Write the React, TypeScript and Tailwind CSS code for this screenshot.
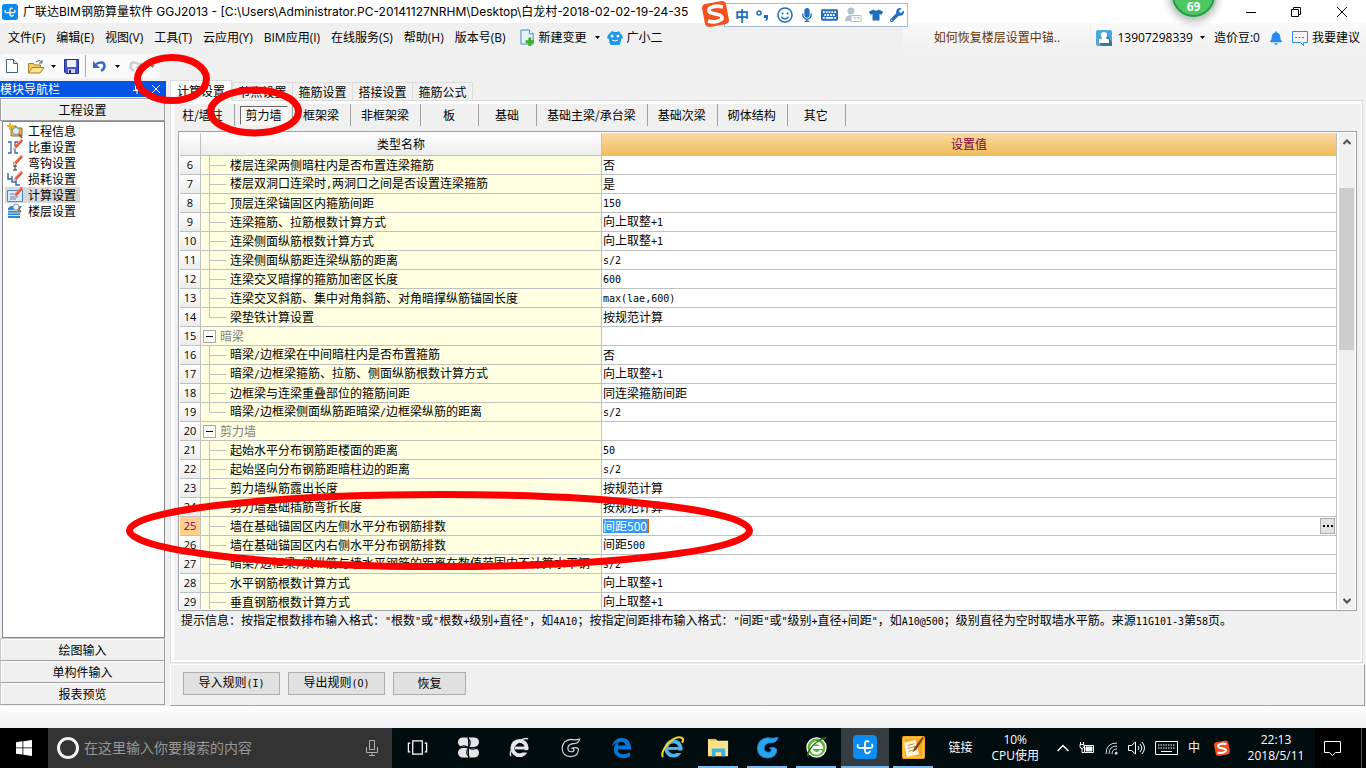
import type { ReactNode } from "react";
import clsx from "clsx";
import {
  FaBell,
  FaKeyboard,
  FaMicrophone,
  FaRegSmile,
  FaTshirt,
  FaWrench,
} from "react-icons/fa";

const uiFont = "font-['Open_Sans','Noto_Sans_CJK_SC',sans-serif]";

const menus = [
  "文件(F)",
  "编辑(E)",
  "视图(V)",
  "工具(T)",
  "云应用(Y)",
  "BIM应用(I)",
  "在线服务(S)",
  "帮助(H)",
  "版本号(B)",
];

const tabs = ["计算设置", "节点设置", "箍筋设置", "搭接设置", "箍筋公式"];

const components = [
  "柱/墙柱",
  "剪力墙",
  "框架梁",
  "非框架梁",
  "板",
  "基础",
  "基础主梁/承台梁",
  "基础次梁",
  "砌体结构",
  "其它",
];

type Row = {
  no: number;
  name: string;
  value?: string;
  kind?: "group" | "last";
};

const rows: Row[] = [
  { no: 6, name: "楼层连梁两侧暗柱内是否布置连梁箍筋", value: "否" },
  { no: 7, name: "楼层双洞口连梁时,两洞口之间是否设置连梁箍筋", value: "是" },
  { no: 8, name: "顶层连梁锚固区内箍筋间距", value: "150" },
  { no: 9, name: "连梁箍筋、拉筋根数计算方式", value: "向上取整+1" },
  { no: 10, name: "连梁侧面纵筋根数计算方式", value: "向上取整+1" },
  { no: 11, name: "连梁侧面纵筋距连梁纵筋的距离", value: "s/2" },
  { no: 12, name: "连梁交叉暗撑的箍筋加密区长度", value: "600" },
  {
    no: 13,
    name: "连梁交叉斜筋、集中对角斜筋、对角暗撑纵筋锚固长度",
    value: "max(lae,600)",
  },
  { no: 14, name: "梁垫铁计算设置", value: "按规范计算", kind: "last" },
  { no: 15, name: "暗梁", kind: "group" },
  { no: 16, name: "暗梁/边框梁在中间暗柱内是否布置箍筋", value: "否" },
  {
    no: 17,
    name: "暗梁/边框梁箍筋、拉筋、侧面纵筋根数计算方式",
    value: "向上取整+1",
  },
  { no: 18, name: "边框梁与连梁重叠部位的箍筋间距", value: "同连梁箍筋间距" },
  {
    no: 19,
    name: "暗梁/边框梁侧面纵筋距暗梁/边框梁纵筋的距离",
    value: "s/2",
    kind: "last",
  },
  { no: 20, name: "剪力墙", kind: "group" },
  { no: 21, name: "起始水平分布钢筋距楼面的距离", value: "50" },
  { no: 22, name: "起始竖向分布钢筋距暗柱边的距离", value: "s/2" },
  { no: 23, name: "剪力墙纵筋露出长度", value: "按规范计算" },
  { no: 24, name: "剪力墙基础插筋弯折长度", value: "按规范计算" },
  { no: 25, name: "墙在基础锚固区内左侧水平分布钢筋排数", value: "间距500" },
  { no: 26, name: "墙在基础锚固区内右侧水平分布钢筋排数", value: "间距500" },
  {
    no: 27,
    name: "暗梁/边框梁/梁纵筋与墙水平钢筋的距离在数值范围内不计算水平钢",
    value: "s/2",
  },
  { no: 28, name: "水平钢筋根数计算方式", value: "向上取整+1" },
  { no: 29, name: "垂直钢筋根数计算方式", value: "向上取整+1" },
];

const activeRow = 25;

// Latin runs are set half as wide as a Chinese character
const Mixed = ({ text }: { text: string }) => (
  <>
    {text.split(/([\x20-\x7e]+)/).map((part, i) =>
      i % 2 ? (
        <span
          key={i}
          className="font-['DejaVu_Sans_Mono',monospace] text-[10px] whitespace-pre"
        >
          {part}
        </span>
      ) : (
        part
      ),
    )}
  </>
);

const Caret = ({ className }: { className?: string }) => (
  <svg viewBox="0 0 5 3" className={clsx("h-[3px] w-[5px]", className)}>
    <path d="M0 0h5L2.5 3z" fill="currentColor" />
  </svg>
);

const GldLogo = ({ className }: { className?: string }) => (
  <svg viewBox="0 0 24 24" className={className}>
    <rect width="24" height="24" rx="4" fill="#0a8cf0" />
    <path
      d="M15.500 6.500c-2-1-3.500 0-3.500 2v7c0 3.200 4 3.500 5 1M4.800 10c-.8 2 .4 3 2.200 3h10c2.500 0 3-2 2-3.500"
      fill="none"
      stroke="#fff"
      strokeWidth="1.900"
      strokeLinecap="round"
    />
  </svg>
);

const SogouLogo = ({ className }: { className?: string }) => (
  <svg viewBox="0 0 27 27" className={className}>
    <path d="M3 4 20 1q3 0 4 3l3 16q0 3-3 4L8 27q-4 0-5-3L0 8q0-3 3-4z" fill="#f4511e" />
    <path
      d="M21 7C14 5 6 7 7 11s12 2 13 6-8 6-14 4"
      fill="none"
      stroke="#fff"
      strokeWidth="3.600"
    />
  </svg>
);

const TitleBar = () => (
  <header className={clsx("flex h-[23px] shrink-0 items-center bg-white", uiFont)}>
    <GldLogo className="ml-0.5 size-4" />
    <h1 className="ml-[5px] flex-1 overflow-hidden font-['Inter','Noto_Sans_CJK_SC',sans-serif] text-xs leading-4 whitespace-nowrap">
      广联达BIM钢筋算量软件 GGJ2013 -
      [C:\Users\Administrator.PC-20141127NRHM\Desktop\白龙村-2018-02-02-19-24-35
    </h1>
    <div className="flex">
      <button aria-label="最小化" className="flex w-[45px] justify-center">
        <svg viewBox="0 0 10 10" className="size-2.5">
          <path d="M0 5.500h10" stroke="#000" />
        </svg>
      </button>
      <button aria-label="还原" className="flex w-[45px] justify-center">
        <svg viewBox="0 0 10 10" className="size-2.5" fill="none" stroke="#000">
          <path d="M.5 2.500h7v7h-7zM2.500 2.500v-2h7v7h-2" />
        </svg>
      </button>
      <button aria-label="关闭" className="flex w-12 justify-center">
        <svg viewBox="0 0 10 10" className="size-2.5" stroke="#000">
          <path d="m0 0 10 10M10 0 0 10" />
        </svg>
      </button>
    </div>
  </header>
);

const MenuBar = () => (
  <nav
    className={clsx(
      "flex h-[29px] shrink-0 items-center text-xs leading-4 whitespace-nowrap",
      uiFont,
    )}
  >
    <div className="flex gap-[11px] pl-2">
      {menus.map((m) => (
        <button key={m}>{m}</button>
      ))}
    </div>
    <button className="ml-3.5 flex items-center gap-1">
      <svg viewBox="0 0 16 18" className="h-[17px] w-[15px]">
        <path d="M1 1h9l4 4v11H1z" fill="#e4f4fd" stroke="#3a86b8" />
        <path d="M10 1v4h4" fill="#fff" stroke="#3a86b8" />
        <path d="M9 9h3v3h3v3h-3v3H9v-3H6v-3h3z" fill="#3cab22" />
      </svg>
      新建变更
      <Caret className="ml-1" />
    </button>
    <button className="ml-[7px] flex items-center gap-1">
      <svg viewBox="0 0 16 16" className="size-4">
        <path
          d="M3 3 5 1l2 1h3l2-1 1 2q3 2 3 5l-2 1q0 5-2 6H4q-2-1-2-6L0 8q0-3 3-5z"
          fill="#1b97e8"
        />
        <circle cx="5" cy="6" r="1.500" fill="#fff" />
        <circle cx="11" cy="6" r="1.500" fill="#fff" />
        <path d="M5 10q3 2 6 0" fill="none" stroke="#fff" />
      </svg>
      广小二
    </button>
    <div className="ml-auto flex h-full w-[187px] items-center justify-center bg-linear-to-b from-[#fafafa] to-[#f0f0f0] text-[#663300]">
      如何恢复楼层设置中锚..
    </div>
    <div className="ml-px flex h-full items-center bg-linear-to-b from-[#fafafa] to-[#f0f0f0] pr-1.5 pl-[5px]">
      <svg viewBox="0 0 16 16" className="size-4">
        <rect width="16" height="16" rx="2" fill="#4ea6da" />
        <path d="M8 3.500 13 8l3 4v4H6l-3-4z" fill="#36769c" />
        <path d="M5 5a3 3 0 0 1 6 0c0 2-1 2.500-1 3.500l3 1V13H3V9.500l3-1C6 7.500 5 7 5 5z" fill="#fff" />
      </svg>
      <button className="ml-[5px] flex items-center gap-[7px]">
        13907298339
        <Caret />
      </button>
      <span className="ml-[9px]">造价豆:0</span>
      <button aria-label="通知" className="ml-2.5">
        <FaBell className="h-3.5 w-3 text-[#2a8bf2]" />
      </button>
      <button className="ml-2.5 flex items-center gap-1">
        <svg viewBox="0 0 16 16" className="size-4" fill="none" stroke="#2a8bf2">
          <path d="M.5 1.500h15v11h-4v3l-3-3h-8z" />
          <path d="M3 7.500h10" strokeDasharray="2 1.500" />
        </svg>
        我要建议
      </button>
    </div>
  </nav>
);

const ToolBar = () => (
  <div className="flex h-7 shrink-0 items-center">
    <div className="flex h-6 w-[160px] items-center rounded-sm bg-[#fafafa] pl-1.5">
      <button aria-label="新建">
        <svg viewBox="0 0 12 14" className="h-3.5 w-3">
          <path d="M.5.5h7l4 4v9H.5z" fill="#fff" stroke="#44617f" />
          <path d="M7.500.5v4h4" fill="#cfdcea" stroke="#44617f" />
        </svg>
      </button>
      <button aria-label="打开" className="ml-2.5 flex items-center gap-1.5">
        <svg viewBox="0 0 17 15" className="h-[15px] w-[17px]">
          <path d="M.5 14V4.500h5l1 1.500h6v3" fill="#f3cf63" stroke="#a5802c" />
          <path d="M.5 14 4 8.500h12L12 14z" fill="#ffe48b" stroke="#a5802c" />
          <path d="M8 3q4-3 6 1m0-3v3h-3" fill="none" stroke="#44617f" />
        </svg>
        <Caret />
      </button>
      <button aria-label="保存" className="ml-2">
        <svg viewBox="0 0 15 15" className="size-[15px]">
          <path d="M.5.5h14v14H2l-1.500-1.500z" fill="#4a53c8" stroke="#272f8c" />
          <path d="M3 1h9v7H3z" fill="#eef1fa" />
          <path d="M4 10h7v4H4z" fill="#cbd0e8" />
          <path d="M5 11h2v3H5z" fill="#272f8c" />
        </svg>
      </button>
      <i className="mx-1.5 h-[22px] w-px bg-[#a8a8a8]" />
      <button aria-label="撤销" className="ml-px flex items-center gap-2">
        <svg viewBox="0 0 14 14" className="size-3.5">
          <path d="M3 5q8-4 8.500 2 0 3-3.500 5" fill="none" stroke="#3568c5" strokeWidth="2.500" />
          <path d="M0 2v7h7z" fill="#3568c5" />
        </svg>
        <Caret />
      </button>
      <button aria-label="重做" className="ml-2 flex items-center gap-2 text-[#888]">
        <svg viewBox="0 0 14 14" className="size-3.5">
          <path d="M11 5Q3 1 2.500 7q0 3 3.500 5" fill="none" stroke="#cfcfcf" strokeWidth="2.500" />
          <path d="M14 2v7H7z" fill="#cfcfcf" />
        </svg>
        <Caret />
      </button>
    </div>
  </div>
);

const Pencil = () => (
  <>
    <path d="m6 11 1.500-4L14 0l2 2-6.500 7z" fill="#e8472b" />
    <path d="m6 11 1.500-4 2 2z" fill="#f4c99a" />
    <path d="M8.500 7 14.500.8" stroke="#f79a80" />
  </>
);

const navItems: { label: string; icon: ReactNode }[] = [
  {
    label: "工程信息",
    icon: (
      <>
        <path d="M4 3h5l1 2h5v8H4z" fill="#e7b84a" stroke="#96702a" />
        <path d="M3 0v7M0 3h7" stroke="#f5b915" strokeWidth="2" />
        <circle cx="9" cy="8" r="3.500" fill="#e3effa" stroke="#7e93ab" />
        <path d="m12 11 3 4" stroke="#8a5a28" strokeWidth="2" />
      </>
    ),
  },
  {
    label: "比重设置",
    icon: (
      <>
        <path d="M1 3h3v11H1M11 3H8v11h3" fill="none" stroke="#3a64ab" strokeWidth="1.300" />
        <Pencil />
      </>
    ),
  },
  {
    label: "弯钩设置",
    icon: (
      <>
        <path d="M8 7v8M6 8h4M6 15h4M6 11h4" fill="none" stroke="#333" />
        <Pencil />
      </>
    ),
  },
  {
    label: "损耗设置",
    icon: (
      <>
        <path d="M1 2v6h4M5 5v6h4M9 9v5h4" fill="none" stroke="#3a64ab" strokeWidth="1.400" />
        <Pencil />
      </>
    ),
  },
  {
    label: "计算设置",
    icon: (
      <>
        <path d="M.5 3.500h15v11H.5z" fill="#dbeafa" stroke="#4f86c6" />
        <path d="M3 7h4M3 10h8M3 12h6" stroke="#4f86c6" />
        <Pencil />
      </>
    ),
  },
  {
    label: "楼层设置",
    icon: (
      <>
        <path d="M1 5 4 3h11l-2 3v9H1z" fill="#2f86cf" />
        <path d="M1 7.500h13M1 10h13M1 12.500h13" stroke="#c8e4f8" />
        <circle cx="9" cy="4" r="3" fill="#eef4fa" stroke="#8a98a8" />
        <path d="m11 6 3 3" stroke="#b0722f" strokeWidth="2" />
      </>
    ),
  },
];

const NavButton = ({ children }: { children: ReactNode }) => (
  <button className="h-[22px] shrink-0 border-r border-b border-l border-[#a0a0a0] border-l-[#c8c8c8] bg-[#f0f0f0] shadow-[inset_1px_1px_0_#fff]">
    {children}
  </button>
);

const Sidebar = () => (
  <aside className="flex w-[166px] shrink-0 flex-col py-px">
    <div className="flex h-4 shrink-0 items-center bg-[#0055e5] text-white">
      <h2 className="flex-1">模块导航栏</h2>
      <button aria-label="固定" className="mr-[11px]">
        <svg viewBox="0 0 8 9" className="h-[9px] w-2" stroke="#fff" fill="none">
          <path d="M2.500.5h3v4h-3zM0 5.500h8M4 6v3" />
        </svg>
      </button>
      <button aria-label="关闭" className="mr-1.5">
        <svg viewBox="0 0 8 8" className="size-2" stroke="#fff">
          <path d="m0 0 8 8M8 0 0 8" />
        </svg>
      </button>
    </div>
    <div className="mr-px flex min-h-0 flex-1 flex-col pt-px">
      <button className="h-[23px] shrink-0 border border-[#a0a0a0] bg-[#f0f0f0] shadow-[inset_1px_1px_0_#fff]">
        工程设置
      </button>
      <ul className="ml-0.5 flex-1 border border-[#828790] bg-white pt-px pl-0.5">
        {navItems.map(({ label, icon }) => (
          <li key={label}>
            <button
              className={clsx(
                "flex h-4 items-center gap-[5px] pr-1 pl-0.5",
                label === "计算设置" && "bg-[#d8d8d8]",
              )}
            >
              <svg viewBox="0 0 16 16" className="size-4">
                {icon}
              </svg>
              {label}
            </button>
          </li>
        ))}
      </ul>
      <div className="h-px shrink-0 bg-[#c8c8c8]" />
      <NavButton>绘图输入</NavButton>
      <NavButton>单构件输入</NavButton>
      <NavButton>报表预览</NavButton>
    </div>
  </aside>
);

const TreeBranch = ({ last }: { last: boolean }) => (
  <span className="mr-1 ml-2 flex h-[18px] w-[17px] shrink-0 flex-col">
    <i className="h-2.5 border-b border-l border-[#c0c0c0]" />
    <i className={clsx("flex-1", !last && "border-l border-[#c0c0c0]")} />
  </span>
);

const SettingRow = ({ no, name, value, kind }: Row) => {
  const isActive = no === activeRow;

  return (
    <tr>
      <th
        scope="row"
        className={clsx(
          "h-[19px] border-r border-b border-[#c0c0c0] p-0 font-['Open_Sans',sans-serif] text-[11px] leading-4 font-normal",
          isActive
            ? "bg-[#ffd08a] text-[#800080]"
            : "bg-linear-to-b from-white to-[#ececec]",
        )}
      >
        {no}
      </th>
      <td className="overflow-hidden border-r border-b border-[#c0c0c0] bg-[#ffffe1] p-0">
        <div className="flex h-[18px] items-center whitespace-nowrap">
          {kind === "group" ? (
            <>
              <button
                aria-label="折叠"
                className="mr-1 ml-0.5 flex size-[13px] items-center justify-center border border-[#a8a8a8] bg-white"
              >
                <i className="h-px w-[7px] bg-black" />
              </button>
              <span className="text-[#808080]">{name}</span>
            </>
          ) : (
            <>
              <TreeBranch last={kind === "last"} />
              <span>
                <Mixed text={name} />
              </span>
            </>
          )}
        </div>
      </td>
      <td className="border-r border-b border-[#c0c0c0] bg-white py-0 pr-px pl-px">
        <div className="flex h-[18px] items-center justify-between">
          {isActive ? (
            <>
              <input
                aria-label={name}
                defaultValue={value}
                className="h-3.5 w-[46px] border-r border-[#cc6600] bg-[#3399ff] leading-3.5 text-white outline-none"
              />
              <button
                aria-label="更多"
                className="flex h-4 w-[15px] items-center justify-center gap-0.5 border border-[#adadad] bg-[#e1e1e1]"
              >
                <i className="size-0.5 bg-black" />
                <i className="size-0.5 bg-black" />
                <i className="size-0.5 bg-black" />
              </button>
            </>
          ) : (
            <span>
              <Mixed text={value ?? ""} />
            </span>
          )}
        </div>
      </td>
    </tr>
  );
};

const ScrollBar = () => (
  <div className="ml-0.5 flex w-4 shrink-0 flex-col bg-[#f0f0f0]">
    <button aria-label="向上滚动" className="flex h-[17px] items-center justify-center">
      <svg viewBox="0 0 8 6" className="h-1.5 w-2" fill="none" stroke="#505050" strokeWidth="2">
        <path d="m.5 5 3.500-3.500L7.500 5" />
      </svg>
    </button>
    <div className="mt-[38px] mr-px h-[162px] bg-[#cdcdcd]" />
    <button
      aria-label="向下滚动"
      className="mt-auto flex h-[17px] items-center justify-center"
    >
      <svg viewBox="0 0 8 6" className="h-1.5 w-2" fill="none" stroke="#505050" strokeWidth="2">
        <path d="m.5 1 3.500 3.500L7.500 1" />
      </svg>
    </button>
  </div>
);

const SettingTable = () => (
  <div className="mr-1 ml-1 flex min-h-0 flex-1 border border-[#a0a0a8] bg-white p-px">
    <div className="min-w-0 flex-1 overflow-hidden">
      <table className="w-full table-fixed border-separate border-spacing-0">
        <colgroup>
          <col className="w-[21px]" />
          <col className="w-[401px]" />
          <col />
        </colgroup>
        <thead>
          <tr className="h-[23px]">
            <td className="border-r border-b border-[#c0c0c0] bg-linear-to-b from-white to-[#ececec] p-0" />
            <th
              scope="col"
              className="border-r border-b border-[#c0c0c0] bg-linear-to-b from-white to-[#ececec] p-0 font-normal"
            >
              类型名称
            </th>
            <th
              scope="col"
              className="border-r border-b border-[#c0c0c0] bg-linear-to-b from-[#fbd9a0] to-[#f0bd5c] p-0 font-normal text-[#800040]"
            >
              设置值
            </th>
          </tr>
        </thead>
        <tbody>
          {rows.map((row) => (
            <SettingRow key={row.no} {...row} />
          ))}
        </tbody>
      </table>
    </div>
    <ScrollBar />
  </div>
);

const SettingsPanel = () => (
  <main className="ml-1 flex min-w-0 flex-1 flex-col">
    <div role="tablist" className="flex h-5 shrink-0 items-end">
      {tabs.map((tab, i) => (
        <button
          key={tab}
          role="tab"
          aria-selected={i === 0}
          className={clsx(
            "border-x border-t border-[#dcdcdc]",
            i === 0
              ? "z-10 -mb-px h-[21px] w-[62px] bg-white"
              : "-mr-px h-[18px] w-[61px] bg-[#f0f0f0]",
          )}
        >
          {tab}
        </button>
      ))}
    </div>
    <section className="mr-[3px] flex min-h-0 flex-1 flex-col border border-[#dcdcdc] bg-white p-[3px] pr-px pb-0.5">
      <div className="flex min-h-0 flex-1 flex-col bg-[#f0f0f0]">
        <div className="flex h-[27px] shrink-0 items-start pl-[3px]">
          {components.map((name, i) => (
            <div
              key={name}
              className="flex h-[22px] min-w-[58px] items-center justify-center border-r border-[#a0a0a0]"
            >
              <button
                className={clsx(
                  name === "剪力墙"
                    ? "h-[19px] w-12 border border-t-[#696969] border-r-white border-b-white border-l-[#696969] bg-[#f8f8f8]"
                    : i === 0
                      ? "pr-2.5 pl-1"
                      : "pr-[11px] pl-2.5",
                )}
              >
                {name}
              </button>
            </div>
          ))}
        </div>
        <SettingTable />
        <p className="h-[49px] shrink-0 overflow-hidden pt-px pl-[7px] leading-4 whitespace-nowrap">
          <Mixed text={'提示信息：按指定根数排布输入格式："根数"或"根数+级别+直径"，如4A10；按指定间距排布输入格式："间距"或"级别+直径+间距"，如A10@500；级别直径为空时取墙水平筋。来源11G101-3第58页。'} />
        </p>
      </div>
    </section>
    <footer className="mt-px mr-px flex h-[42px] shrink-0 items-center gap-2 border border-t-white border-r-[#a0a0a0] border-b-[#a0a0a0] border-l-white pb-1 pl-3">
      <button className="h-[23px] w-[97px] border border-[#adadad] bg-[#e1e1e1]">
        <Mixed text="导入规则(I)" />
      </button>
      <button className="h-[23px] w-[97px] border border-[#adadad] bg-[#e1e1e1]">
        <Mixed text="导出规则(O)" />
      </button>
      <button className="h-[23px] w-[73px] border border-[#adadad] bg-[#e1e1e1]">
        恢复
      </button>
    </footer>
  </main>
);

const swirl =
  "M23 1.500q-1.500 5.500-7 5.500Q9.500 7 8.500 12q0 5 4.500 5 3 0 3-2.500 0-1.500-2-2 5-1.500 7.500 1Q22 22.500 12 23 2 22.500 1.500 13 2 3 12 1.800q6 1.200 11-.3z";

const taskItems: { name: string; open?: boolean; active?: boolean; icon: ReactNode }[] = [
  {
    name: "任务视图",
    icon: (
      <path d="M7 5h10v14H7zM4.500 7.500h-2v9h2M19.500 7.500h2v9h-2" fill="none" stroke="#fff" strokeWidth="1.300" />
    ),
  },
  {
    name: "四叶草",
    icon: (
      <>
        <path
          d="M6 1.500h5.500v10H6a5 5 0 0 1 0-10zM12.500 1.500H18a5 5 0 0 1 0 10h-5.500zM6 12.500h5.500v10H6a5 5 0 0 1 0-10zM12.500 12.500H18a5 5 0 0 1 0 10h-5.500z"
          fill="#e6e6e6"
        />
        <path
          d="M11 2q5 4 1 10t1 10M2 13q4-5 10-1t10-1"
          fill="none"
          stroke="#010c0f"
          strokeWidth="1.300"
        />
      </>
    ),
  },
  {
    name: "浏览器",
    icon: (
      <>
        <circle cx="12" cy="12.500" r="7.500" fill="none" stroke="#e6e6e6" strokeWidth="4" />
        <path d="M7 12.500h14" stroke="#e6e6e6" strokeWidth="3" />
        <path d="M15 16h8" stroke="#010c0f" strokeWidth="2.500" />
        <path d="M3 21C0 15 14 0 21 3" fill="none" stroke="#e6e6e6" strokeWidth="1.500" />
      </>
    ),
  },
  {
    name: "G",
    icon: (
      <g transform="translate(2 2) scale(.85)">
        <path d={swirl} fill="none" stroke="#d8d8d8" strokeWidth="1.400" />
      </g>
    ),
  },
  {
    name: "Edge",
    icon: (
      <path
        d="M2 11Q4 2 12 2q10 0 10 12H8q0 5 6 5 4 0 7-2v4q-3 2-8 2-9-1-9-9 0-5 5-8-4 1-7 5zm6-1h8q0-4-4-4t-4 4z"
        fill="#0078d7"
        fillRule="evenodd"
      />
    ),
  },
  {
    name: "IE",
    icon: (
      <>
        <circle cx="13" cy="13" r="7.500" fill="none" stroke="#4db4f0" strokeWidth="4" />
        <path d="M7 13h15" stroke="#4db4f0" strokeWidth="3" />
        <path d="M16 16.500h8" stroke="#010c0f" strokeWidth="2.500" />
        <path d="M2 22C-2 16 13-2 22 2q2 1 0 5" fill="none" stroke="#f6cf35" strokeWidth="2.200" />
      </>
    ),
  },
  {
    name: "资源管理器",
    open: true,
    icon: (
      <>
        <path d="M1 3h8l2 2h11v16H1z" fill="#fde08a" />
        <path d="M3 3h6v2H3z" fill="#f5b53a" />
        <path d="M5 13h14v8h-4v-4H9v4H5z" fill="#3cb3e6" />
      </>
    ),
  },
  {
    name: "G浏览器",
    open: true,
    icon: <path d={swirl} fill="#2ba4ee" stroke="#1a86dc" />,
  },
  {
    name: "360浏览器",
    open: true,
    icon: (
      <>
        <circle cx="12" cy="12" r="10" fill="#5ab52c" stroke="#fff" strokeWidth="1.300" />
        <path d="M17 15a5.500 5.500 0 1 1 .5-3H7" fill="none" stroke="#fff" strokeWidth="3" />
        <path d="M3 21C2 15 14 2 22 2" fill="none" stroke="#2c7a1c" strokeWidth="1.500" />
      </>
    ),
  },
  { name: "GGJ2013", open: true, active: true, icon: null },
  {
    name: "便签",
    open: true,
    icon: (
      <>
        <rect width="24" height="24" rx="2" fill="#f6a81c" />
        <path d="M2 2h20v20H2z" fill="none" stroke="#ffd873" />
        <path d="m2 7 12-3 4 15-13 3z" fill="#fff5d8" />
        <path d="m6 10 7-2M6 13l8-2M7 16l7-2" stroke="#a48a5a" />
        <path d="m11 17 2-5 8-11 2 1-8 12z" fill="#8a3d12" />
      </>
    ),
  },
];

const TaskBar = () => (
  <footer
    className={clsx(
      "flex h-10 shrink-0 items-center bg-[#010c0f] text-xs leading-4 whitespace-nowrap text-white",
      uiFont,
    )}
  >
    <button aria-label="开始" className="flex h-full w-12 shrink-0 items-center justify-center bg-black">
      <svg viewBox="0 0 16 16" className="size-4" fill="#fff">
        <path d="M0 2.200 6.500 1.300v6.200H0zM7.300 1.200 16 0v7.500H7.300zM0 8.300h6.500v6.200L0 13.700zM7.300 8.300H16V16l-8.700-1.200z" />
      </svg>
    </button>
    <label className="flex h-full w-[344px] shrink-0 items-center bg-[#333] pr-3 pl-[9px]">
      <span className="size-[22px] rounded-full border-[3px] border-[#f0f0f0]" />
      <input
        aria-label="搜索"
        placeholder="在这里输入你要搜索的内容"
        className="ml-[5px] min-w-0 flex-1 text-sm outline-none placeholder:text-[#979797]"
      />
      <svg viewBox="0 0 16 18" className="h-[18px] w-4" fill="none" stroke="#b0b0b0">
        <path d="M5.500 1.500h5v9h-5zM2.500 8v5.500h11V8M8 13.500V17M5 16.500h6" />
      </svg>
    </label>
    <div className="flex h-full">
      {taskItems.map(({ name, open, active, icon }) => (
        <button
          key={name}
          aria-label={name}
          className={clsx(
            "flex h-full shrink-0 items-center justify-center border-b-2",
            active && "-ml-1 mr-1 w-12 bg-[#353d40]",
            !active && (open ? "mr-[9px] w-10" : "w-[51px]"),
            open ? "border-[#76b9ed]" : "border-transparent",
          )}
        >
          {active ? (
            <GldLogo className="size-6" />
          ) : (
            <svg viewBox="0 0 24 24" className="size-[23px]">
              {icon}
            </svg>
          )}
        </button>
      ))}
    </div>
    <div className="ml-auto flex h-full shrink-0 items-center">
      <span className="mr-[19px]">链接</span>
      <div className="mr-[18px] text-center">
        <div>10%</div>
        <div>CPU使用</div>
      </div>
      <div className="flex items-center gap-2.5">
        <svg viewBox="0 0 12 8" className="h-2 w-3" fill="none" stroke="#fff" strokeWidth="1.500">
          <path d="m.5 7 5.500-5.500L11.500 7" />
        </svg>
        <svg viewBox="0 0 16 12" className="h-3 w-4" fill="none" stroke="#fff">
          <path d="M5.500 3.500h9v7h-9zM1 2.500h4v2q0 2-2 2t-2-2zM1.500 0v2M4.500 0v2M3 6.500v4h2" />
          <path d="M7 5h6v4H7z" fill="#fff" />
        </svg>
        <svg viewBox="0 0 13 13" className="size-[13px]" fill="none" stroke="#ddd">
          <path d="M1 12Q1 1 12 1M4 12q0-8 8-8M7 12q0-5 5-5" />
          <path d="M10 12q0-2 2-2v2z" fill="#fff" />
        </svg>
        <svg viewBox="0 0 17 14" className="h-3.5 w-[17px]" fill="none" stroke="#fff">
          <path d="M.5 4.500h3l4-3.500v12l-4-3.500h-3zM10 5q2 2 0 4M12 3q3.500 4 0 8M14 1q5 6 0 12" />
        </svg>
        <svg viewBox="0 0 23 14" className="h-3.5 w-[23px]" fill="none" stroke="#fff">
          <path d="M.5.5h22v13H.5z" />
          <path d="M3 4h17M3 7h17" strokeDasharray="1.500 1" />
          <path d="M6 10.500h11" />
        </svg>
        <span>中</span>
        <SogouLogo className="ml-1 size-4" />
      </div>
      <time className="mr-[9px] ml-4 w-[60px] text-center">
        22:13
        <br />
        2018/5/11
      </time>
      <div className="flex h-full items-center bg-black pr-1 pl-[9px]">
        <button aria-label="操作中心" className="pr-5">
          <svg viewBox="0 0 17 17" className="size-[17px]" fill="none" stroke="#fff">
            <path d="M.5 1.500h16v11h-5l-3 3-3-3h-5z" />
          </svg>
        </button>
        <i className="h-full w-px bg-[#555]" />
      </div>
    </div>
  </footer>
);

// Floating input method bar
const ImeBar = () => (
  <div className="absolute top-0 left-[702px] z-20 flex items-start">
    <SogouLogo className="z-10 size-[27px]" />
    <div className="mt-[3px] -ml-[5px] flex h-6 w-[184px] items-center gap-[7px] border border-[#a9bccf] bg-white pl-2.5 text-[#1d6fc0]">
      <span className="text-sm leading-4 font-bold">中</span>
      <svg viewBox="0 0 14 14" className="size-3.5">
        <circle cx="3" cy="5" r="2" fill="none" stroke="currentColor" strokeWidth="1.500" />
        <path d="M8 7h4v3q0 3-3 3 1-1 1-3H8z" fill="currentColor" />
      </svg>
      <FaRegSmile className="size-4" />
      <FaMicrophone className="size-3.5" />
      <FaKeyboard className="h-4 w-[17px]" />
      <svg viewBox="0 0 17 16" className="h-4 w-[17px] text-[#b4bfd0]">
        <circle cx="6" cy="4" r="3.500" fill="currentColor" />
        <path d="M0 14q0-6 6-6 3 0 4 2H6v4z" fill="currentColor" />
        <path d="M6 8.500h10v6H6z" fill="#fff" stroke="currentColor" />
        <path d="M8 10.500h2v2M12 10.500h2v2" fill="none" stroke="currentColor" />
      </svg>
      <FaTshirt className="size-3.5" />
      <FaWrench className="size-3.5" />
    </div>
  </div>
);

const SpeedBall = () => (
  <div className="absolute -top-7 left-[1170px] z-20 flex size-[47px] items-end justify-center rounded-full border-2 border-[#c6cdc8] bg-[#4cc761] pb-0.5 font-['Open_Sans',sans-serif] text-xs leading-4 font-bold text-white shadow-[inset_0_0_0_2px_#259a4c,0_2px_8px_#0005]">
    69
  </div>
);

// Red circles drawn over the window
const Marks = () => (
  <svg
    className="pointer-events-none absolute top-0 left-0 z-30 h-[600px] w-[800px]"
    viewBox="0 0 800 600"
    fill="none"
    stroke="#ff0000"
    strokeWidth="7"
  >
    <ellipse cx="172" cy="79" rx="34.500" ry="21.500" />
    <ellipse cx="254.500" cy="111.500" rx="44" ry="21.500" />
    <ellipse cx="439.500" cy="530.500" rx="310" ry="36" />
  </svg>
);

export default function App() {
  return (
    <div className="relative flex h-screen flex-col overflow-hidden bg-[#f0f0f0] font-['Noto_Sans_CJK_SC',sans-serif] text-xs leading-4 text-black">
      <TitleBar />
      <MenuBar />
      <ToolBar />
      <div className="flex min-h-0 flex-1">
        <Sidebar />
        <SettingsPanel />
      </div>
      <div className="h-[22px] shrink-0 bg-linear-to-b from-white to-[#f0f0f0]" />
      <TaskBar />
      <ImeBar />
      <SpeedBall />
      <Marks />
    </div>
  );
}
